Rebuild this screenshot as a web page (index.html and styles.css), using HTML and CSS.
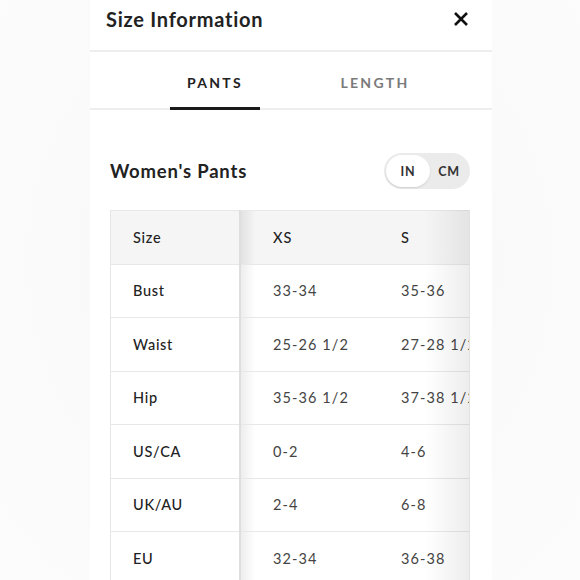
FILE: index.html
```html
<!DOCTYPE html>
<html>
<head>
<meta charset="utf-8">
<link rel="stylesheet" href="styles.css">
</head>
<body>
<div class="page">
  <div class="panel">
    <div class="header">
      <div class="title">Size Information</div>
      <svg class="close" width="16" height="16" viewBox="0 0 16 16"><path d="M2 2 L14 14 M14 2 L2 14" stroke="#111" stroke-width="2.6" stroke-linecap="butt"/></svg>
    </div>
    <div class="tabs">
      <div class="tab active">PANTS</div>
      <div class="tab">LENGTH</div>
    </div>
    <div class="content">
      <div class="section-head">
        <div class="section-title">Women's Pants</div>
        <div class="toggle">
          <div class="opt on">IN</div>
          <div class="opt">CM</div>
        </div>
      </div>
      <div class="table-wrap">
        <table class="sizes">
          <tr class="head"><td class="lab">Size</td><td class="first">XS</td><td>S</td></tr>
          <tr><td class="lab">Bust</td><td class="first">33-34</td><td>35-36</td></tr>
          <tr><td class="lab">Waist</td><td class="first">25-26 1/2</td><td>27-28 1/2</td></tr>
          <tr><td class="lab">Hip</td><td class="first">35-36 1/2</td><td>37-38 1/2</td></tr>
          <tr><td class="lab">US/CA</td><td class="first">0-2</td><td>4-6</td></tr>
          <tr><td class="lab">UK/AU</td><td class="first">2-4</td><td>6-8</td></tr>
          <tr><td class="lab">EU</td><td class="first">32-34</td><td>36-38</td></tr>
        </table>
      </div>
    </div>
  </div>
</div>
</body>
</html>
```
FILE: styles.css
```css
html, body {
  margin: 0;
  padding: 0;
  height: 100%;
  overflow: hidden;
}
body {
  background: #f9f9f9;
  font-family: "Lato", "Open Sans", sans-serif;
  color: #222;
}
.page {
  height: 580px;
  background: radial-gradient(ellipse at 50% 45%, #f7f7f7 0%, #fafafa 60%, #fcfcfc 100%);
}
.panel {
  margin-left: 90px;
  width: 402px;
  height: 580px;
  background: #fff;
  overflow: hidden;
}
.header {
  display: flex;
  align-items: center;
  justify-content: space-between;
  padding: 0 23px 12px 16px;
  box-sizing: content-box;
  height: 38px;
  border-bottom: 2px solid #eeeeee;
}
.title {
  font-size: 20px;
  font-weight: 700;
  letter-spacing: 0.75px;
  color: #222;
}
.close {
  display: block;
}
.tabs {
  display: flex;
  gap: 70px;
  padding-left: 80px;
  border-bottom: 2px solid #eeeeee;
  height: 56px;
}
.tab {
  width: 90px;
  display: flex;
  align-items: center;
  justify-content: center;
  font-size: 14px;
  font-weight: 700;
  letter-spacing: 2.3px;
  color: #7a7a7a;
  padding-top: 6px;
  box-sizing: border-box;
  margin-bottom: -2px;
  border-bottom: 3px solid transparent;
}
.tab.active {
  color: #222;
  border-bottom-color: #1a1a1a;
}
.content {
  padding: 43px 22px 0 20px;
}
.section-head {
  display: flex;
  justify-content: space-between;
  align-items: center;
  margin-bottom: 21px;
}
.section-title {
  font-size: 18.5px;
  font-weight: 700;
  letter-spacing: 0.8px;
  color: #222;
}
.toggle {
  width: 86px;
  height: 36px;
  border-radius: 18px;
  background: #ebebeb;
  display: flex;
  align-items: center;
  padding: 2px;
  box-sizing: border-box;
}
.opt {
  flex: 1;
  height: 32px;
  border-radius: 16px;
  display: flex;
  align-items: center;
  justify-content: center;
  font-size: 12.5px;
  font-weight: 700;
  letter-spacing: 0.8px;
  color: #333;
}
.opt.on {
  background: #fff;
  box-shadow: 0 1px 2px rgba(0,0,0,0.12);
  flex: 0 0 44px;
}
.table-wrap {
  position: relative;
  width: 360px;
  overflow: hidden;
  border-left: 1px solid #e6e6e6;
  box-sizing: border-box;
}
.table-wrap::after {
  content: "";
  position: absolute;
  top: 0;
  right: 0;
  bottom: 0;
  width: 44px;
  background: linear-gradient(to right, rgba(0,0,0,0), rgba(0,0,0,0.07));
  border-right: 1px solid #e2e2e2;
}
.sizes {
  border-collapse: collapse;
  table-layout: fixed;
  width: 387px;
}
.sizes td {
  height: 53.5px;
  border-top: 1px solid #e8e8e8;
  border-bottom: 1px solid #e8e8e8;
  padding: 0 0 0 32px;
  width: 129px;
  box-sizing: border-box;
  font-size: 14.5px;
  letter-spacing: 1.1px;
  color: #444;
  white-space: nowrap;
  overflow: hidden;
}
.sizes td.lab {
  width: 129px;
  padding-left: 22px;
  color: #222;
  font-weight: 500;
  letter-spacing: 0.7px;
  border-right: 2px solid #dedede;
  background: #fff;
}
.sizes td.first {
  background: linear-gradient(to right, rgba(0,0,0,0.07), rgba(0,0,0,0) 14px), #fff;
}
.sizes tr.head td {
  background: #f5f5f5;
  color: #222;
  font-weight: 500;
}
.sizes tr.head td.first {
  background: linear-gradient(to right, rgba(0,0,0,0.08), rgba(0,0,0,0) 14px), #f5f5f5;
}
```
